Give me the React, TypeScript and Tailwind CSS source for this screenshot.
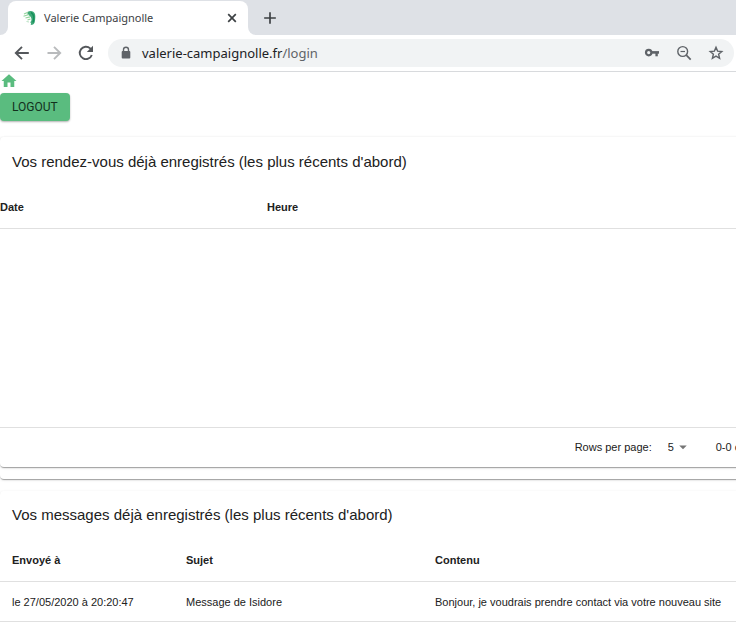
import React from "react";
import { MdAdd, MdArrowDropDown, MdHome } from "react-icons/md";

const messages = [
  {
    sent: "le 27/05/2020 à 20:20:47",
    subject: "Message de Isidore",
    content: "Bonjour, je voudrais prendre contact via votre nouveau site",
  },
];

function Favicon() {
  return (
    <svg viewBox="0 0 16 16" className="size-4 shrink-0" fill="none" aria-hidden="true">
      <path
        d="M5.500 2C8 .2 12 .8 13 4C13.600 6.200 13.200 9 13 11C12.600 13.500 11.500 15 8.500 15C9.600 13.800 9 12.800 8.200 12.200C9.800 11 9.800 9 9 7.500C8.300 6 7 5 5.500 4.500Z"
        fill="#3fa878"
      />
      <path d="M9 2.500C11.800 4 12.300 8 11 12.500" stroke="#15905a" strokeWidth="1.500" />
      <path d="M2 4L6 2.200M1.500 6.200L7 4.500M3.500 8L8 6.800M5.500 10L8.500 9" stroke="#93d49c" strokeWidth="1.200" />
      <path d="M4.500 11.500L7 12" stroke="#b9e2c4" strokeWidth="1" />
    </svg>
  );
}

function CloseIcon() {
  return (
    <svg viewBox="0 0 16 16" className="size-4" fill="none" aria-hidden="true">
      <path d="M4.200 4.200L11.800 11.800M11.800 4.200L4.200 11.800" stroke="#3c4043" strokeWidth="1.700" />
    </svg>
  );
}

function ArrowIcon({ forward = false }: { forward?: boolean }) {
  return (
    <svg viewBox="0 0 20 20" className="size-5" fill="none" stroke="currentColor" strokeWidth="1.900" aria-hidden="true">
      <path d={forward ? "M3.500 10H16M10 3.800L16.200 10L10 16.200" : "M16.800 10H4.200M10 3.800L3.800 10L10 16.200"} />
    </svg>
  );
}

function ReloadIcon() {
  return (
    <svg viewBox="0 0 20 20" className="size-5" aria-hidden="true">
      <path
        d="M15.800 12A6.200 6.200 0 1 1 14.200 5.400L15.200 6.500"
        fill="none"
        stroke="currentColor"
        strokeWidth="1.900"
      />
      <path d="M17 2.800V9H10.800Z" fill="currentColor" />
    </svg>
  );
}

function LockIcon() {
  return (
    <svg viewBox="0 0 12 14" className="h-3.5 w-3" aria-hidden="true">
      <path d="M3.500 6V3.800A2.500 2.500 0 0 1 8.500 3.800V6" fill="none" stroke="#5f6368" strokeWidth="1.400" />
      <rect x="1.700" y="5" width="8.600" height="7.500" rx="1" fill="#5f6368" />
    </svg>
  );
}

function KeyIcon() {
  return (
    <svg viewBox="0 0 16 16" className="size-4" fill="none" stroke="#5f6368" aria-hidden="true">
      <circle cx="4.700" cy="7.600" r="2.700" strokeWidth="2.200" />
      <path d="M8 7.400H15" strokeWidth="2.600" />
      <path d="M12.600 7.500V11.300" strokeWidth="2.400" />
    </svg>
  );
}

function ZoomOutIcon() {
  return (
    <svg viewBox="0 0 16 16" className="size-4" fill="none" stroke="#5f6368" aria-hidden="true">
      <circle cx="6.700" cy="6.500" r="4.900" strokeWidth="1.400" />
      <path d="M4.500 6.500H9" strokeWidth="1.200" />
      <path d="M10.300 10.200L14.700 14.700" strokeWidth="1.700" />
    </svg>
  );
}

function StarIcon() {
  return (
    <svg viewBox="0 0 16 16" className="size-4" fill="none" aria-hidden="true">
      <path
        d="M8 2.300L9.600 6.100L13.800 6.500L10.600 9.200L11.600 13.300L8 11.100L4.400 13.300L5.400 9.200L2.200 6.500L6.400 6.100Z"
        stroke="#5f6368"
        strokeWidth="1.400"
      />
    </svg>
  );
}

function BrowserBar() {
  return (
    <header className="font-['Noto_Sans',sans-serif] text-[#3c4043]">
      <div className="flex h-[35px] bg-[#dee1e6]">
        <div className="flex w-2 bg-white">
          <span className="w-full rounded-br-lg bg-[#dee1e6]" />
        </div>
        <div className="pt-px">
          <div className="flex h-[34px] w-60 items-center rounded-t-lg bg-white pr-2 pl-3.5">
            <Favicon />
            <span className="ml-1.5 flex-1 whitespace-nowrap text-[11px]">Valerie Campaignolle</span>
            <button type="button" aria-label="Fermer l'onglet">
              <CloseIcon />
            </button>
          </div>
        </div>
        <div className="flex w-2 bg-white">
          <span className="w-full rounded-bl-lg bg-[#dee1e6]" />
        </div>
        <button type="button" aria-label="Nouvel onglet" className="ml-1 flex h-full items-center">
          <MdAdd className="size-5" />
        </button>
      </div>
      <div className="flex h-[37px] items-center border-b border-[#d8dadd] bg-white pr-0.5 pl-3">
        <div className="flex gap-3 text-[#54575b]">
          <button type="button" aria-label="Précédent">
            <ArrowIcon />
          </button>
          <button type="button" aria-label="Suivant" className="text-[#b9bbbd]">
            <ArrowIcon forward />
          </button>
          <button type="button" aria-label="Actualiser">
            <ReloadIcon />
          </button>
        </div>
        <div className="ml-3 flex h-7 flex-1 items-center rounded-full bg-[#f1f3f4] pr-2.5 pl-3 text-[#5f6368]">
          <LockIcon />
          <a href="#login" className="ml-2.5 flex-1 text-[13px] leading-5">
            <span className="text-[#202124]">valerie-campaignolle.fr</span>/login
          </a>
          <div className="flex items-center gap-4">
            <button type="button" aria-label="Mots de passe">
              <KeyIcon />
            </button>
            <button type="button" aria-label="Zoom arrière">
              <ZoomOutIcon />
            </button>
            <button type="button" aria-label="Ajouter aux favoris">
              <StarIcon />
            </button>
          </div>
        </div>
      </div>
    </header>
  );
}

const paper =
  "rounded bg-white shadow-[0_2px_1px_-1px_rgba(0,0,0,0.2),0_1px_1px_0_rgba(0,0,0,0.14),0_1px_3px_0_rgba(0,0,0,0.12)]";

function Appointments() {
  return (
    <section className={`${paper} min-w-[801px] pb-3`}>
      <div className={paper}>
        <h2 className="flex h-[50px] items-center px-3 text-[15px]">
          Vos rendez-vous déjà enregistrés (les plus récents d'abord)
        </h2>
        <table className="w-full table-fixed border-collapse text-left">
          <thead>
            <tr className="h-[41px] border-b border-[#e0e0e0]">
              <th className="w-1/3 p-0">Date</th>
              <th className="p-0">Heure</th>
            </tr>
          </thead>
          <tbody>
            <tr className="h-[199px] border-b border-[#e0e0e0]">
              <td colSpan={2} />
            </tr>
          </tbody>
        </table>
        <div className="flex h-[39px] items-center justify-end pr-12">
          <label htmlFor="rows">Rows per page:</label>
          <div className="ml-4 flex items-center">
            <select id="rows" defaultValue="5" className="w-6 appearance-none bg-transparent">
              <option value="5">5</option>
              <option value="10">10</option>
            </select>
            <MdArrowDropDown className="pointer-events-none -ml-[18px] size-[18px] text-[#757575]" />
          </div>
          <span className="ml-6 whitespace-nowrap">0-0 of 0</span>
        </div>
      </div>
    </section>
  );
}

function Messages() {
  return (
    <section className={`${paper} mt-3 min-w-[801px] pb-12`}>
      <h2 className="flex h-12 items-center px-3 text-[15px]">
        Vos messages déjà enregistrés (les plus récents d'abord)
      </h2>
      <table className="w-full table-fixed border-collapse text-left">
        <thead>
          <tr className="h-[43px] border-b border-[#e0e0e0]">
            <th className="w-[174px] px-3">Envoyé à</th>
            <th className="w-[249px] px-3">Sujet</th>
            <th className="px-3">Contenu</th>
          </tr>
        </thead>
        <tbody>
          {messages.map((m) => (
            <tr key={m.sent} className="h-10 border-b border-[#e0e0e0]">
              <td className="px-3">{m.sent}</td>
              <td className="px-3">{m.subject}</td>
              <td className="px-3">{m.content}</td>
            </tr>
          ))}
        </tbody>
      </table>
    </section>
  );
}

export default function App() {
  return (
    <div className="h-screen overflow-hidden bg-white">
      <BrowserBar />
      <main className="font-['Liberation_Sans',Arial,sans-serif] text-[11px] leading-4 text-[#212121]">
        <a href="#home" aria-label="Accueil" className="block w-[18px]">
          <MdHome className="size-[18px] text-[#5abc7f]" />
        </a>
        <button
          type="button"
          className="mt-[3px] mb-4 flex h-7 items-center rounded bg-[#5abc7f] px-3 font-[Roboto,sans-serif] text-xs text-[#12301d] shadow-[0_1px_2px_rgba(0,0,0,0.3)]"
        >
          LOGOUT
        </button>
        <Appointments />
        <Messages />
      </main>
    </div>
  );
}
